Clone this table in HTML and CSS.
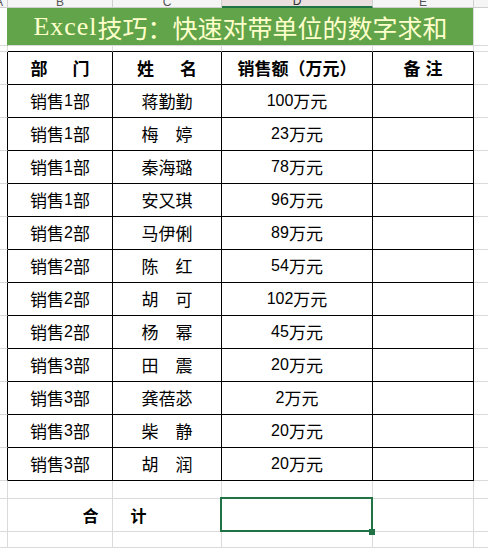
FILE: index.html
```html
<!DOCTYPE html>
<html lang="zh-CN">
<head>
<meta charset="utf-8">
<title>Excel技巧</title>
<link rel="stylesheet" href="styles.css">
</head>
<body>
<div class="sheet">
  <div class="c hd hd-a"><span>A</span></div>
  <div class="c hd"><span>B</span></div>
  <div class="c hd"><span>C</span></div>
  <div class="c hd hd-sel"><span>D</span></div>
  <div class="c hd"><span>E</span></div>
  <div class="c hd last"></div>

  <div class="c ga"></div>
  <div class="c title"><span class="lat">Excel</span>技巧：快速对带单位的数字求和</div>
  <div class="c last"></div>

  <div class="c"></div>
  <div class="c tt"></div>
  <div class="c tt"></div>
  <div class="c tt"></div>
  <div class="c tt"></div>
  <div class="c last"></div>

  <div class="c ta"></div>
  <div class="c t th"><span class="sp4">部　门</span></div>
  <div class="c t th"><span class="sp45">姓　名</span></div>
  <div class="c t th">销售额（万元）</div>
  <div class="c t th"><span class="sp5">备注</span></div>
  <div class="c last"></div>

  <div class="c ta"></div><div class="c t">销售<span class="n">1</span>部</div><div class="c t">蒋勤勤</div><div class="c t"><span class="n">100</span>万元</div><div class="c t"></div><div class="c last"></div>
  <div class="c ta"></div><div class="c t">销售<span class="n">1</span>部</div><div class="c t">梅　婷</div><div class="c t"><span class="n">23</span>万元</div><div class="c t"></div><div class="c last"></div>
  <div class="c ta"></div><div class="c t">销售<span class="n">1</span>部</div><div class="c t">秦海璐</div><div class="c t"><span class="n">78</span>万元</div><div class="c t"></div><div class="c last"></div>
  <div class="c ta"></div><div class="c t">销售<span class="n">1</span>部</div><div class="c t">安又琪</div><div class="c t"><span class="n">96</span>万元</div><div class="c t"></div><div class="c last"></div>
  <div class="c ta"></div><div class="c t">销售<span class="n">2</span>部</div><div class="c t">马伊俐</div><div class="c t"><span class="n">89</span>万元</div><div class="c t"></div><div class="c last"></div>
  <div class="c ta"></div><div class="c t">销售<span class="n">2</span>部</div><div class="c t">陈　红</div><div class="c t"><span class="n">54</span>万元</div><div class="c t"></div><div class="c last"></div>
  <div class="c ta"></div><div class="c t">销售<span class="n">2</span>部</div><div class="c t">胡　可</div><div class="c t"><span class="n">102</span>万元</div><div class="c t"></div><div class="c last"></div>
  <div class="c ta"></div><div class="c t">销售<span class="n">2</span>部</div><div class="c t">杨　幂</div><div class="c t"><span class="n">45</span>万元</div><div class="c t"></div><div class="c last"></div>
  <div class="c ta"></div><div class="c t">销售<span class="n">3</span>部</div><div class="c t">田　震</div><div class="c t"><span class="n">20</span>万元</div><div class="c t"></div><div class="c last"></div>
  <div class="c ta"></div><div class="c t">销售<span class="n">3</span>部</div><div class="c t">龚蓓苾</div><div class="c t"><span class="n">2</span>万元</div><div class="c t"></div><div class="c last"></div>
  <div class="c ta"></div><div class="c t">销售<span class="n">3</span>部</div><div class="c t">柴　静</div><div class="c t"><span class="n">20</span>万元</div><div class="c t"></div><div class="c last"></div>
  <div class="c ta"></div><div class="c t">销售<span class="n">3</span>部</div><div class="c t">胡　润</div><div class="c t"><span class="n">20</span>万元</div><div class="c t"></div><div class="c last"></div>

  <div class="c"></div>
  <div class="c"></div>
  <div class="c"></div>
  <div class="c"></div>
  <div class="c"></div>
  <div class="c last"></div>

  <div class="c"></div>
  <div class="c tot">合　　计</div>
  <div class="c sel"></div>
  <div class="c"></div>
  <div class="c last"></div>

  <div class="c"></div>
  <div class="c"></div>
  <div class="c"></div>
  <div class="c"></div>
  <div class="c"></div>
  <div class="c last"></div>
</div>
</body>
</html>
```

FILE: styles.css
```css
html, body {
  margin: 0;
  padding: 0;
}

body {
  width: 488px;
  height: 548px;
  overflow: hidden;
  background: #ffffff;
  font-family: "Noto Sans CJK SC", sans-serif;
  color: #000000;
}

.sheet {
  display: grid;
  grid-template-columns: 8px 105px 109px 151px 101px 1fr;
  grid-template-rows: 8px 38px 6px repeat(13, 33px) 18px 33px 1fr;
  height: 548px;
}

.c {
  box-sizing: border-box;
  border-right: 1px solid #dadada;
  border-bottom: 1px solid #dadada;
  display: flex;
  align-items: center;
  justify-content: center;
  font-size: 17px;
  line-height: 20px;
  white-space: nowrap;
  min-width: 0;
}

.last {
  border-right: none;
}

/* column headers */
.hd {
  background: #f5f5f5;
  border-right-color: #cfcfcf;
  border-bottom-color: #cfcfcf;
  align-items: flex-end;
  overflow: hidden;
  font-family: "Liberation Sans", sans-serif;
  font-size: 12px;
  line-height: 12px;
  color: #555555;
}

.hd span {
  margin-bottom: -1px;
}

.hd-a {
  justify-content: flex-end;
}

.hd-a span {
  margin-right: 4px;
}

.hd-sel {
  background: #ebdfdf;
  border-bottom: 2px solid #217346;
  color: #333333;
}

/* title */
.ga {
  border-right-color: #62a449;
}

.title {
  grid-column: 2 / 6;
  background: #62a449;
  color: #ffffcc;
  font-size: 25px;
  line-height: 30px;
  font-weight: 400;
  padding-top: 1px;
}

.lat {
  font-family: "Liberation Serif", serif;
  font-size: 26px;
  letter-spacing: 1px;
}

/* table */
.tt {
  border-bottom-color: #000000;
}

.ta {
  border-right-color: #000000;
}

.t {
  border-right-color: #000000;
  border-bottom-color: #000000;
}

.th {
  font-weight: 700;
}

.sp4 {
  letter-spacing: 4px;
  padding-left: 4px;
}

.sp45 {
  letter-spacing: 4.5px;
  padding-left: 4.5px;
}

.sp5 {
  letter-spacing: 5px;
  padding-left: 5px;
}

.n {
  font-family: "Liberation Sans", sans-serif;
  font-size: 16px;
}

/* total row */
.tot {
  grid-column: 2 / 4;
  font-weight: 700;
  font-size: 16px;
  background: linear-gradient(#dadada, #dadada) no-repeat 104px 0 / 1px 100%;
}

.sel {
  position: relative;
}

.sel::before {
  content: "";
  position: absolute;
  left: -2px;
  top: -2px;
  right: -1px;
  bottom: -1px;
  border: 2px solid #217346;
}

.sel::after {
  content: "";
  position: absolute;
  left: 147px;
  top: 30px;
  width: 6px;
  height: 6px;
  background: #217346;
}
```
